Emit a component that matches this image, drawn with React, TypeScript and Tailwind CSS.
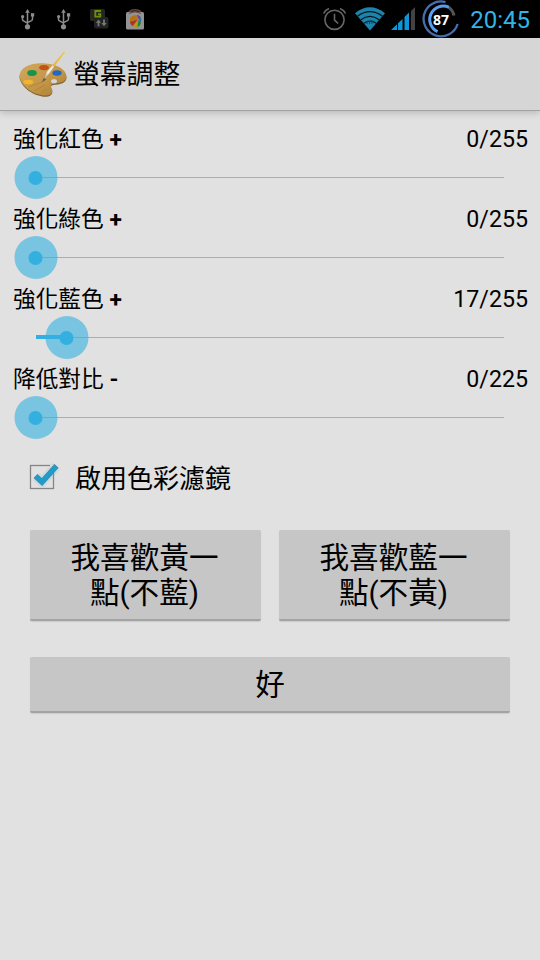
import React, { useState } from 'react';

interface ColorSliderProps {
  label: string;
  sign: string;
  value: number;
  max: number;
  onChange: (val: number) => void;
}

const UsbIcon = () => (
  <svg width="14" height="21" viewBox="0 0 14 21" fill="none" stroke="#8c8c8c" strokeWidth="1.5">
    <path d="M6.500 3v14M1.500 7.5v2.700q0 1.200 1 1.700L6.500 14.200M11.500 6v3.800q0 1.200-1 1.800L6.500 13.600" />
    <path d="M6.500 0l2.300 3.700H4.200z" fill="#8c8c8c" stroke="none" />
    <circle cx="1.6" cy="7.6" r="1.6" fill="#8c8c8c" stroke="none" />
    <path d="M9.900 4.200h3.300v3.300H9.900z" fill="#8c8c8c" stroke="none" />
    <circle cx="6.5" cy="17.8" r="2.6" fill="#8c8c8c" stroke="none" />
  </svg>
);

const TransferIcon = () => (
  <svg width="19" height="20" viewBox="0 0 19 20">
    <rect x="0" y="0" width="15" height="12" rx="1.5" fill="#252722" />
    <rect x="4" y="8" width="14.5" height="11.5" rx="2" fill="#232323" />
    <path d="M11 2H5.3v5.7h5V5.2H8" fill="none" stroke="#6d8f0b" strokeWidth="1.8" />
    <path d="M8.5 10.5L5.8 13.8h1.8v3.5h1.8v-3.5h1.8zM14 17.3l-2.7-3.3h1.8v-3.5h1.8V14h1.8z" fill="#777" />
  </svg>
);

const MarketIcon = () => (
  <svg width="20" height="21" viewBox="0 0 20 21">
    <path d="M3.5 5Q4 .8 10 .8T16.5 5" fill="none" stroke="#64483c" strokeWidth="1.5" />
    <rect x="1" y="3" width="18" height="17.5" rx="1.5" fill="#939393" />
    <path d="M4 4.500Q10 1 16 4.500" fill="none" stroke="#6b5145" strokeWidth="1.3" />
    <path d="M5 9.500Q6.500 6 11 6.200L13 10.200 5 12z" fill="#b5730e" />
    <path d="M11.500 6q3.500 0 4.500 3l-2.500 1z" fill="#7b3a9b" />
    <path d="M5 12.500l8-2L8 17Q5 15.500 5 12.500z" fill="#b7301b" />
    <path d="M13 10.500L8 17q2 1.500 4.500 1z" fill="#b2981c" />
    <path d="M13.500 11l-1 7q3.500-1.500 3.300-5z" fill="#22832c" />
    <path d="M13.500 10l2.300 3q.8-2 .2-4z" fill="#1a6ea0" />
  </svg>
);

const AlarmIcon = () => (
  <svg width="24" height="24" viewBox="0 0 24 24" fill="none" stroke="#666" strokeWidth="1.6">
    <circle cx="11.5" cy="12.8" r="9.6" />
    <path d="M11.500 6.800v6.300l3.700 3.400M.6 6.500Q2.500 2.900 6 1.500M22.600 6.500Q20.700 2.900 17 1.500" />
  </svg>
);

const WifiIcon = () => (
  <svg width="30" height="24" viewBox="0 0 30 24">
    <path d="M0 6.200Q15-5.500 30 6.200L15 23.500z" fill="#1d84ac" />
    <g fill="none" stroke="#06141b" strokeWidth="1.2">
      <path d="M2.500 9.200q12.500-9 25 0" />
      <path d="M5.800 12.800q9.200-7 18.400 0" />
      <path d="M9 16.300q6-4.600 12 0" />
    </g>
    <path d="M12 14v3M14.500 14.500v2.500M17 13.500V17" stroke="#0d4560" strokeWidth="1" />
  </svg>
);

const SignalIcon = () => (
  <svg width="25" height="23" viewBox="0 0 25 23">
    <path d="M0 23l6-5.700V23zM7 16.300l4.500-4.300v11H7zM13.500 10l4.500-4.400V23h-4.500z" fill="#0c97dc" />
    <path d="M20 4l4-4v23h-4z" fill="#434343" />
  </svg>
);

const BatteryRing = () => (
  <svg width="38" height="38" viewBox="0 0 38 38" fill="none">
    <path d="M23.500 2.100A17.400 17.400 0 1 0 35.600 24" stroke="#476fae" strokeWidth="2.3" />
    <path d="M27 7.300A14 14 0 0 1 32 15.500" stroke="#555" strokeWidth="3" />
    <path d="M15.500 31.700A13.300 13.300 0 1 1 27 7.300" stroke="#5b9cf0" strokeWidth="3" />
    <text x="19" y="24.9" textAnchor="middle" fontSize="14" fontWeight="700" fill="#fff" className="font-['Open_Sans',sans-serif]">87</text>
  </svg>
);

const PaletteIcon = () => (
  <svg width="50" height="48" viewBox="0 0 50 48">
    <defs>
      <linearGradient id="wood" x1="0" y1="0" x2="1" y2="1">
        <stop offset="0" stopColor="#d1a960" />
        <stop offset="0.55" stopColor="#c39647" />
        <stop offset="1" stopColor="#a97d35" />
      </linearGradient>
      <linearGradient id="brush" x1="0" y1="1" x2="1" y2="0">
        <stop offset="0" stopColor="#8a8478" />
        <stop offset="0.25" stopColor="#f1eee5" />
        <stop offset="0.45" stopColor="#eee7d4" />
        <stop offset="0.5" stopColor="#e3b73e" />
        <stop offset="1" stopColor="#efc44d" />
      </linearGradient>
    </defs>
    <g fillRule="evenodd">
      <path d="M.5 28C.5 18.500 11 13.500 24 14c13.500.5 23 6 23.500 13.500.2 4.500-5 7-10.500 7.200-4 .1-5.500 1-5 3 .4 1.800 1.800 2.800 1.200 5.300-.6 2.500-3 3.500-6 3.700C19 47 4 41 .5 28z" fill="#7d6130" />
      <path d="M.5 26.800C.5 17.500 11 12.800 24 13.300c13.500.5 23 6 23.500 13 .2 4.500-5 7-10.500 7.200-4 .1-5.500 1.200-5 3.200.4 1.800 1.800 2.800 1.200 5.100-.6 2.500-3 3.500-6 3.700C19 46 4 40 .5 26.800zM32 31.200a3 2.200 0 1 0 6 0a3 2.200 0 1 0-6 0z" fill="url(#wood)" />
      <path d="M32 31.200a3 2.200 0 1 0 6 0a3 2.200 0 1 0-6 0z" fill="#d6d6d6" />
    </g>
    <path d="M10 37l13-5M15 41l11-6M22 43l6-4" stroke="#ad8038" strokeWidth="0.7" />
    <ellipse cx="25" cy="17.6" rx="4.8" ry="2.6" fill="#c5501a" />
    <ellipse cx="13" cy="23" rx="4.8" ry="2.9" fill="#169447" />
    <ellipse cx="38" cy="23" rx="4.6" ry="2.7" fill="#2367c4" />
    <ellipse cx="9.3" cy="32" rx="5" ry="2.3" fill="#f0b52a" />
    <path d="M24.300 30.500l3.500-8.500L44.800 1.800q1.300-.5 1.100.8L30 23.500z" fill="url(#brush)" />
    <path d="M22.800 32.500l2-4.500 2.400 1.500z" fill="#695b45" />
  </svg>
);

const ColorSlider: React.FC<ColorSliderProps> = ({ label, sign, value, max, onChange }) => (
  <div className="h-20">
    <div className="flex h-[38px] items-center justify-between px-3 text-[23.2px] leading-[38px]">
      <span className="whitespace-pre pl-px pt-1 text-[22.7px]">{label} <b>{sign}</b></span>
      <span className="pt-0.5 font-['Roboto',sans-serif]">{value}/{max}</span>
    </div>
    <div className="relative mx-9 flex h-[42px] items-center">
      <div className="-mt-px h-px w-full bg-[#acaeae]" />
      <div className="absolute left-0 top-[18px] h-1 bg-[#33b0e0]" style={{ width: `${(value / max) * 100}%` }} />
      <div
        className="absolute -top-px -ml-[0.5px] grid h-[43px] w-[43px] -translate-x-1/2 place-items-center rounded-full bg-[#33b0e0]/60"
        style={{ left: `${(value / max) * 100}%` }}
      >
        <div className="h-3.5 w-3.5 rounded-full bg-[#33b0e0]" />
      </div>
      <input
        type="range" min={0} max={max} value={value}
        onChange={e => onChange(Number(e.target.value))}
        className="absolute inset-0 w-full cursor-pointer opacity-0"
      />
    </div>
  </div>
);

const buttonClass =
  'rounded-xs border-b-2 border-[#a3a3a3] bg-[#c6c6c6] pt-0.5 text-[29.6px] leading-[35px] shadow-[0_1px_1px_rgba(0,0,0,0.1)] cursor-pointer';

const App: React.FC = () => {
  const [red, setRed] = useState(0);
  const [green, setGreen] = useState(0);
  const [blue, setBlue] = useState(17);
  const [contrast, setContrast] = useState(0);
  const [enabled, setEnabled] = useState(true);

  return (
    <div className="flex h-[960px] w-[540px] flex-col overflow-hidden bg-[#e1e1e1] font-['Roboto','Noto_Sans_CJK_TC',sans-serif] text-black">
      {/* Status bar */}
      <div className="flex h-[38px] shrink-0 items-center justify-between bg-black pl-[21px] pr-2.5">
        <div className="flex items-center">
          <UsbIcon />
          <div className="ml-[22px]"><UsbIcon /></div>
          <div className="ml-[19px]"><TransferIcon /></div>
          <div className="ml-4"><MarketIcon /></div>
        </div>
        <div className="flex items-center">
          <AlarmIcon />
          <div className="ml-2"><WifiIcon /></div>
          <div className="ml-1.5 pb-px"><SignalIcon /></div>
          <div className="ml-1.5"><BatteryRing /></div>
          <span className="ml-2.5 pt-0.5 text-2xl leading-9 text-[#33b5e5]">20:45</span>
        </div>
      </div>

      {/* Title bar */}
      <header className="flex h-[73px] shrink-0 items-center border-b border-[#a3a3a3] bg-[#d6d6d6] pl-[19px] shadow-[0_2px_7px_rgba(0,0,0,0.18)]">
        <PaletteIcon />
        <h1 className="ml-1 pt-0.5 text-[26.8px] leading-10">螢幕調整</h1>
      </header>

      <main className="pt-2">
        <ColorSlider label="強化紅色" sign="+" value={red} max={255} onChange={setRed} />
        <ColorSlider label="強化綠色" sign="+" value={green} max={255} onChange={setGreen} />
        <ColorSlider label="強化藍色" sign="+" value={blue} max={255} onChange={setBlue} />
        <ColorSlider label="降低對比" sign="-" value={contrast} max={225} onChange={setContrast} />

        <label className="mt-[15px] flex h-12 cursor-pointer items-center pl-7 text-[26px]">
          <input type="checkbox" checked={enabled} onChange={e => setEnabled(e.target.checked)} className="sr-only" />
          <svg width="36" height="36" viewBox="0 1 36 36" fill="none">
            <rect x="2.5" y="6.5" width="23" height="23" stroke="#858585" strokeWidth="1.3" />
            {enabled && (
              <>
                <path d="M8 17.500l6 5.500L28.500 7" stroke="#3fb9e4" strokeWidth="10" strokeLinejoin="round" opacity="0.15" />
                <path d="M22 6.500h4v6" stroke="#d5dfe2" strokeWidth="2" />
                <path d="M7.500 17l6.500 6L28.500 6.800" stroke="#4c8298" strokeWidth="5.6" />
                <path d="M8 17.400l6 5.600L28.200 7.200" stroke="#1f9ccb" strokeWidth="4.4" />
              </>
            )}
          </svg>
          <span className="ml-[11px] pt-0.5">啟用色彩濾鏡</span>
        </label>

        <div className="mt-7 grid grid-cols-2 gap-[18px] px-[30px]">
          <button className={`${buttonClass} h-[91px] pr-0.5`} onClick={() => { setRed(17); setGreen(17); setBlue(0); }}>
            我喜歡黃一<br />點(不藍)
          </button>
          <button className={`${buttonClass} h-[91px] pr-0.5`} onClick={() => { setRed(0); setGreen(0); setBlue(17); }}>
            我喜歡藍一<br />點(不黃)
          </button>
        </div>
        <div className="mt-9 px-[30px]">
          <button className={`${buttonClass} h-14 w-full`}>好</button>
        </div>
      </main>
    </div>
  );
};

export default App;
